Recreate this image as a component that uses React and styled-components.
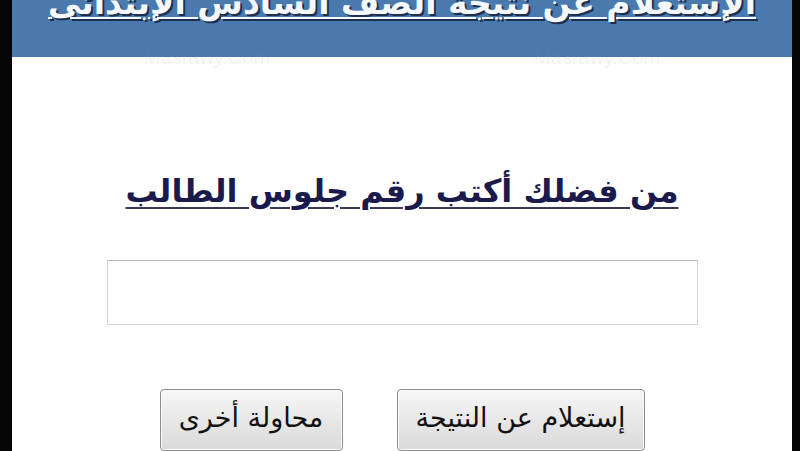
import React from "react";
import styled, { createGlobalStyle } from "styled-components";

const GlobalStyle = createGlobalStyle`
  html, body {
    margin: 0;
    padding: 0;
    background: #050505;
  }
  #root {
    height: 451px;
  }
`;

const Frame = styled.div`
  display: flex;
  height: 451px;
  padding: 0 8px 0 12px;
  box-sizing: border-box;
  overflow: hidden;
`;

const Page = styled.div`
  position: relative;
  flex: 1;
  display: flex;
  flex-direction: column;
  align-items: center;
  background: #ffffff;
  direction: rtl;
  font-family: "DejaVu Sans", "Liberation Sans", sans-serif;
  overflow: hidden;
`;

const Header = styled.div`
  align-self: stretch;
  height: 58px;
  background: #4a79ad;
  display: flex;
  justify-content: center;
  overflow: hidden;
`;

const Title = styled.h1`
  margin: -22px 0 0 0;
  font-size: 33px;
  font-weight: bold;
  line-height: 50px;
  color: #f4f8fc;
  white-space: nowrap;
  text-decoration: underline;
  text-decoration-thickness: 2px;
  text-underline-offset: 3px;
  text-shadow: 2px 2px 0 #1d2f4d;
`;

const Watermark = styled.div`
  position: absolute;
  top: 46px;
  left: 0;
  right: 0;
  display: flex;
  justify-content: space-around;
  direction: ltr;
  font-family: "Liberation Sans", sans-serif;
  font-size: 20px;
  color: rgba(120, 140, 170, 0.12);
  pointer-events: none;
`;

const Heading = styled.h2`
  margin: 114px 0 0 0;
  font-size: 32px;
  font-weight: bold;
  line-height: 40px;
  color: #1a1a4c;
  text-decoration: underline;
  text-decoration-color: #3a3a55;
  text-decoration-thickness: 2px;
  text-underline-offset: 5px;
`;

const Field = styled.input`
  margin-top: 49px;
  width: 591px;
  height: 66px;
  box-sizing: border-box;
  border: 1px solid #d4d4d4;
  border-top-color: #b4b4b4;
  background: #fff;
  outline: none;
  font-size: 24px;
`;

const Actions = styled.div`
  display: flex;
  gap: 54px;
  margin-top: 64px;
`;

const Button = styled.button`
  width: ${(p) => p.$w}px;
  height: 62px;
  box-sizing: border-box;
  border: 1px solid #8c8c8c;
  border-radius: 4px;
  background: linear-gradient(#f7f7f7, #e6e6e6 55%, #dadada);
  box-shadow: inset 0 0 0 1px #fbfbfb;
  font-family: "DejaVu Sans", "Liberation Sans", sans-serif;
  font-size: 27px;
  color: #111;
  padding: 0 0 6px 0;
  cursor: pointer;
`;

export default function App() {
  return (
    <>
      <GlobalStyle />
      <Frame>
        <Page>
          <Header>
            <Title>الإستعلام عن نتيجة الصف السادس الإبتدائى</Title>
          </Header>
          <Watermark>
            <span>Masrawy.Com</span>
            <span>Masrawy.Com</span>
          </Watermark>
          <Heading>من فضلك أكتب رقم جلوس الطالب</Heading>
          <Field type="text" />
          <Actions>
            <Button $w={248}>إستعلام عن النتيجة</Button>
            <Button $w={183}>محاولة أخرى</Button>
          </Actions>
        </Page>
      </Frame>
    </>
  );
}
